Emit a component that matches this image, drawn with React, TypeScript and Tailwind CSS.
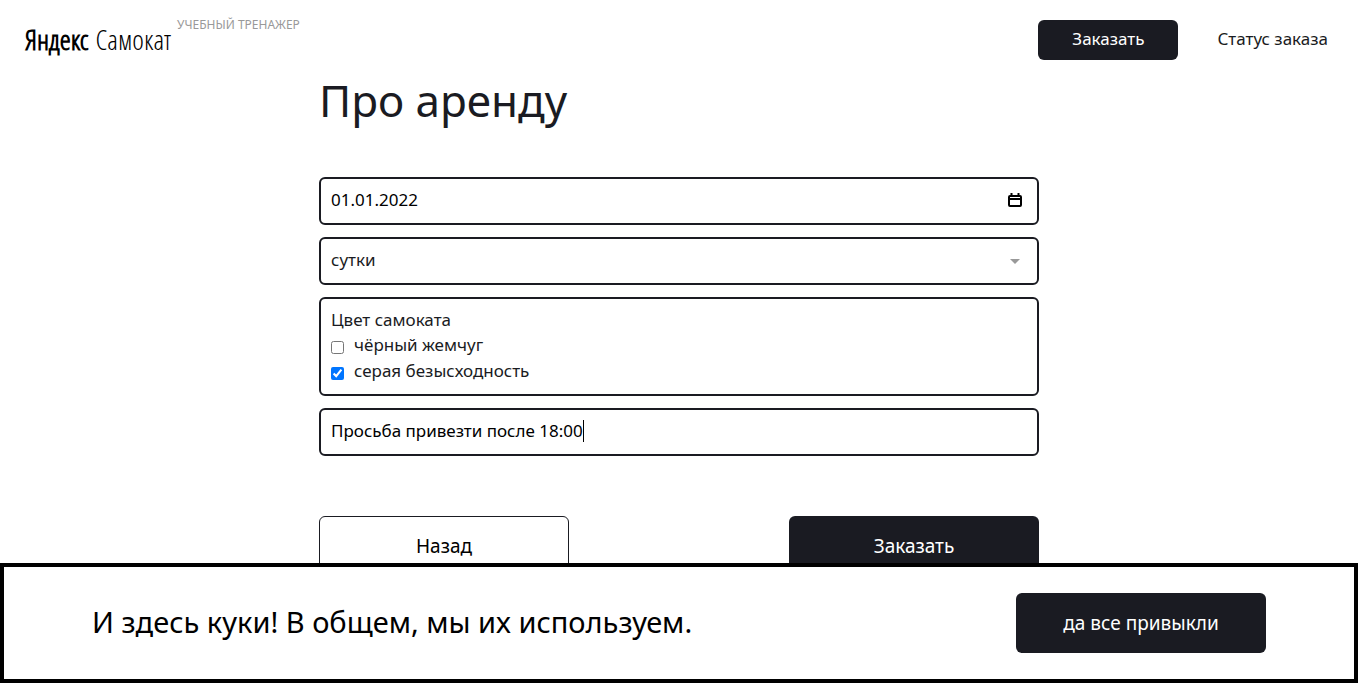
import { useState } from "react";

const periods = ["сутки", "двое суток", "трое суток", "четверо суток"];

function Header() {
  return (
    <header className="flex h-20 items-start justify-between pr-[30px] pl-[25px]">
      <div className="flex items-start pt-[17px]">
        <a
          href="#"
          className="flex items-baseline gap-[7px] pt-1.5 font-['Open_Sans_Condensed_Light','Roboto_Condensed',sans-serif] text-[28px] leading-8 text-black"
        >
          <span className="font-bold">Яндекс</span>
          <span className="font-light">Самокат</span>
        </a>
        <span className="pl-1.5 text-[12px] leading-4 text-[#999]">УЧЕБНЫЙ ТРЕНАЖЕР</span>
      </div>
      <nav className="flex items-center gap-[39px] pt-5 text-[17px]">
        <button type="button" className="h-10 w-[140px] rounded-md bg-[#1a1b22] pb-0.5 text-white">
          Заказать
        </button>
        <a href="#status" className="pb-0.5">
          Статус заказа
        </a>
      </nav>
    </header>
  );
}

function RentForm() {
  const [date, setDate] = useState("01.01.2022");
  const [comment, setComment] = useState("Просьба привезти после 18:00");

  return (
    <form className="mx-auto max-w-[720px]" onSubmit={(e) => e.preventDefault()}>
      <h1 className="text-[44px] leading-10">Про аренду</h1>

      <div className="mt-[57px] flex flex-col gap-3 text-[17px]">
        <div className="flex h-12 items-center rounded-md border-2 border-[#1a1b22] bg-white px-2.5 pb-0.5">
          <input
            type="text"
            aria-label="Когда привезти самокат"
            value={date}
            onChange={(e) => setDate(e.target.value)}
            className="min-w-0 grow text-black outline-none"
          />
          <button type="button" aria-label="Открыть календарь" className="mr-1">
            <svg width="16" height="16" viewBox="0 0 16 16" fill="none" stroke="#000">
              <rect x="2" y="4" width="12" height="10" rx="1" strokeWidth="2" />
              <path d="M4.5 1v3M11.5 1v3" strokeWidth="2" />
              <path d="M2 7h12" strokeWidth="2" />
            </svg>
          </button>
        </div>

        <div className="relative">
          <select
            aria-label="Срок аренды"
            className="h-12 w-full appearance-none rounded-md border-2 border-[#1a1b22] bg-white px-2.5 pb-0.5 outline-none"
          >
            {periods.map((p) => (
              <option key={p}>{p}</option>
            ))}
          </select>
          <svg
            className="pointer-events-none absolute top-[22px] right-[19px]"
            width="10"
            height="5"
            viewBox="0 0 10 5"
            fill="#999"
          >
            <path d="M0 0h10L5 5z" />
          </svg>
        </div>

        <fieldset className="rounded-md border-2 border-[#1a1b22] px-2.5 pt-2 pb-2.5">
          <div className="leading-[25px]">Цвет самоката</div>
          <label className="flex items-center gap-2.5 leading-[26px]">
            <input type="checkbox" className="mt-1 size-[13px]" />
            чёрный жемчуг
          </label>
          <label className="flex items-center gap-2.5 leading-[26px]">
            <input type="checkbox" defaultChecked className="mt-1 size-[13px]" />
            серая безысходность
          </label>
        </fieldset>

        <label className="flex h-12 items-center rounded-md border-2 border-[#1a1b22] bg-white px-2.5 pb-0.5">
          <input
            type="text"
            aria-label="Комментарий для курьера"
            value={comment}
            onChange={(e) => setComment(e.target.value)}
            className="field-sizing-content max-w-full text-black caret-transparent outline-none"
          />
          <span className="h-[22px] w-px bg-black" />
        </label>
      </div>

      <div className="mt-[60px] flex justify-between text-[19px]">
        <button
          type="button"
          className="h-15 w-[250px] rounded-md border border-[#1a1b22] bg-white text-black"
        >
          Назад
        </button>
        <button type="submit" className="h-15 w-[250px] rounded-md bg-[#1a1b22] text-white">
          Заказать
        </button>
      </div>
    </form>
  );
}

function CookieBar() {
  return (
    <div className="fixed inset-x-0 bottom-0 flex items-center justify-between border-4 border-black bg-white px-[88px] py-[26px] text-black">
      <p className="pb-0.5 text-[29px] leading-10">И здесь куки! В общем, мы их используем.</p>
      <button type="button" className="h-15 w-[250px] rounded-md bg-[#1a1b22] text-[19px] text-white">
        да все привыкли
      </button>
    </div>
  );
}

export default function App() {
  return (
    <div className="min-h-screen bg-white font-['Noto_Sans',sans-serif] text-[#1a1b22]">
      <Header />
      <main>
        <RentForm />
      </main>
      <CookieBar />
    </div>
  );
}
